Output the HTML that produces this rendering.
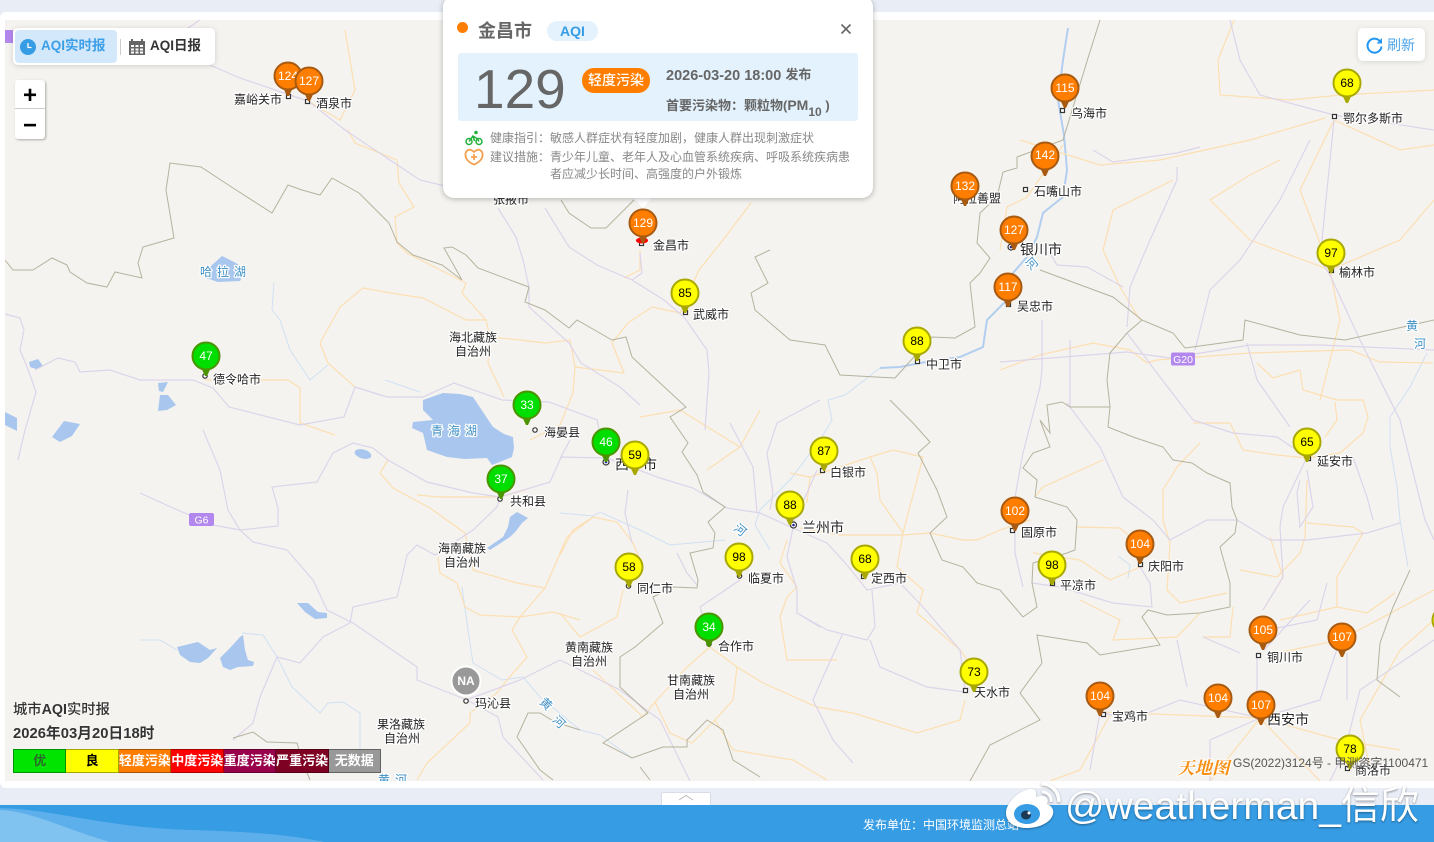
<!DOCTYPE html>
<html lang="zh"><head><meta charset="utf-8"><title>城市AQI实时报</title>
<style>
*{box-sizing:border-box}
html,body{margin:0;padding:0;width:1434px;height:842px;overflow:hidden;background:#e9edf6;font-family:"Liberation Sans","Noto Sans CJK SC",sans-serif}
.a{position:absolute}
#frame{left:0;top:12px;width:1434px;height:776px;background:#fff;border-radius:6px 0 0 6px}
#map{left:0;top:0}
.l text{font-size:12px;fill:#222;stroke:#fff;stroke-width:2.5px;paint-order:stroke;stroke-linejoin:round}
.l text.b{font-size:14px}
.w text{font-size:12px;fill:#3d8fc4;stroke:#fff;stroke-width:2.5px;paint-order:stroke;stroke-linejoin:round}
.m text{font-size:12px;text-anchor:middle;font-family:"Liberation Sans",sans-serif}
.m .o,.m .g,.m .n{fill:#fff}.m .y{fill:#000}
.rd{fill:none;stroke:#dcd4ea;stroke-width:1.2}
.hw{fill:none;stroke:#fcdfb2;stroke-width:1.2}
.bd{fill:none;stroke:#b5b39e;stroke-width:1}
.rv{fill:none;stroke:#cfe0f4;stroke-width:1}
.yr{fill:none;stroke:#b2cef0;stroke-width:2}
#tabs{left:13px;top:28px;width:202px;height:37px;background:#fff;border-radius:5px;box-shadow:0 1px 6px rgba(0,0,0,.15)}
#act{left:2px;top:2px;width:102px;height:33px;background:#d3e8fb;border-radius:4px}
#zoom{left:15px;top:80px;width:30px;height:59px;background:#fff;border-radius:3px;box-shadow:1px 1px 2px rgba(0,0,0,.3);color:#000;text-align:center}
#refresh{left:1358px;top:28px;width:67px;height:33px;background:#fff;border-radius:5px;box-shadow:0 1px 6px rgba(0,0,0,.12)}
#pop{left:443px;top:-4px;width:430px;height:202px;background:#fff;border-radius:11px;box-shadow:0 1px 6px rgba(0,0,0,.28)}
#leg{left:13px;top:749px;width:368px;height:24px;display:flex;font-size:13px;font-weight:bold;line-height:22px;text-align:center;color:#fff}
#leg div{flex:1;border:1px solid rgba(0,0,0,.35);border-left-width:0;white-space:nowrap;overflow:hidden}
#leg div:first-child{border-left-width:1px}
#foot{left:0;top:805px;width:1434px;height:37px;background:#369ce4;overflow:hidden}
</style></head><body>
<div class="a" id="frame"></div>
<svg class="a" id="map" width="1434" height="842" viewBox="0 0 1434 842">
<defs>
<clipPath id="c"><rect x="5" y="20" width="1429" height="761"/></clipPath>
<g id="p"><path d="M-5 11.500H5L1 20H-1Z" fill="currentColor" stroke="none"/><circle r="13.500" stroke-width="2"/></g>
</defs>
<g clip-path="url(#c)">
<rect x="5" y="20" width="1429" height="761" fill="#f5f3ef"/>
<!-- lakes -->
<g fill="#a9c6ee">
<path d="M423 400L443 393 460 394 473 397 483 412 493 427 504 434 513 437 514 448 512 457 492 465 487 458 465 459 447 457 427 450 423 433 412 428 413 422 433 420 423 410Z"/>
<path d="M510 517L517 512 528 518 522 523 516 531 510 537 490 550 487 548 503 537 508 527Z"/>
<path d="M211 266L222 256 236 263 246 270 240 281 218 282 206 278Z"/>
<ellipse cx="363" cy="454" rx="8.500" ry="4.500" transform="rotate(15 363 454)"/>
<path d="M297 603L308 603 318 612 327 613 327 618 315 619 305 612Z"/>
<path d="M177 647L198 642 210 650 217 648 208 658 200 663 190 662 180 655Z"/>
<path d="M240 637L243 635 245 650 248 660 254 662 253 666 238 667 230 670 223 667 220 658 230 648Z"/>
<path d="M29 362L38 359 43 366 36 369 30 367ZM158 383L168 382 163 392 159 391ZM160 395L168 395 176 405 167 410 158 411ZM5 412L17 418 17 431 5 425ZM52 437L64 421 80 424 72 436 60 442Z"/>
</g>
<!-- rivers -->
<path class="yr" d="M1068 28L1063 60 1058 100 1064 135 1067 170 1063 197 1043 213 1037 237 1027 257 1013 273 1007 300 987 320 983 347 960 357 920 363 900 367 880 368"/>
<g class="rv">
<path d="M880 368L845 395 828 400 832 420 820 440 790 480 760 510 755 525 770 550M800 500L780 510"/>
<path d="M1427 353L1410 387 1390 417 1390 447 1397 487 1400 520 1408 567"/>
<path d="M242 633L263 635 277 657 292 687 320 713 328 703 343 702 360 713 360 750"/>
<path d="M462 587L468 630 473 663 502 680 523 677 540 697 580 730 600 735 632 758"/>
<path d="M140 640L160 640 177 650M560 513L593 516 600 512 640 530 670 545 725 540"/>
<path d="M272 310L280 320 290 350 310 380 328 365M274 282L272 310M420 392L385 380"/>
<path d="M1118 556L1130 565 1128 578"/>
</g>
<!-- highways -->
<g class="hw">
<path d="M348 130L355 143 397 160 399 183 414 207 395 217 397 243 407 253 466 283 462 293 486 320 490 337 520 340 545 343 570 340 575 367 573 393 560 425 530 440"/>
<path d="M490 337L488 363 504 397"/>
<path d="M320 343L340 307 363 288 391 293 423 298 466 320 486 320M320 343L328 363 355 387"/>
<path d="M205 380L288 380 300 388 300 423 335 435"/>
<path d="M640 250L640 270 624 278M680 313L652 307 628 323 612 343 624 373 575 367M699 270L723 240 751 203M680 313L699 270"/>
<path d="M388 460L380 473 393 488 430 508 465 533 473 570 517 583 545 588 520 617 512 630 527 657 507 680 497 693 470 713 470 723 427 763 417 780"/>
<path d="M417 495L440 497 500 497 525 490M438 557L440 573 457 583 465 607 480 615 520 617 553 612 580 620M545 588L567 537 580 527 593 517 617 522 633 543 640 560"/>
<path d="M560 555L573 530 593 517M623 590L617 617 580 637 560 613M593 670L643 717 655 702 687 667 710 647 737 667 763 683 817 707 853 713 917 733 960 720 965 700"/>
<path d="M655 702L670 733 692 743 715 720 733 700 737 667M715 720L733 750 793 760 827 780"/>
<path d="M640 417L680 410 740 447 760 410M707 470L740 447M810 477L790 473M807 503L810 477 870 457 893 450 923 457 903 533 880 500 877 473 870 457"/>
<path d="M787 540L780 563 797 587 787 597 780 617 787 660 837 660M800 528L840 535 903 535 930 533 963 540 977 540 1000 530 1030 520"/>
<path d="M903 533L897 567 923 590 917 613 960 650 975 670"/>
<path d="M1000 370L1040 355 1093 343 1130 350 1147 363 1157 360 1250 353 1350 350 1380 362 1433 363"/>
<path d="M1300 370L1303 390 1337 400 1363 400 1368 417 1363 433 1340 453 1307 458M1335 402L1337 420 1325 437M1257 363L1273 378 1300 370"/>
<path d="M1193 423L1230 423 1243 450 1277 455 1307 458M1200 443L1177 467 1163 490 1163 520 1170 543 1167 590 1180 603 1227 593"/>
<path d="M1103 460L1043 487 1035 497M1077 527L1120 528 1140 545M1033 553L1080 560 1110 580 1140 567"/>
<path d="M1240 570L1277 577 1300 553 1305 537 1307 480M1270 537L1283 577 1263 610M1307 523L1353 527 1363 533 1337 577 1337 607 1367 613 1395 593M1280 620L1337 607"/>
<path d="M1203 637L1230 637 1233 607M1080 600L1120 620 1113 640 1177 637 1200 613"/>
<path d="M1000 250L1007 207 1027 197 1063 145M1173 180L1113 210 1103 250 1120 287 1140 320"/>
<path d="M1110 715L1080 770 1050 781M1210 781L1260 718 1320 781M1370 770L1360 720 1400 650 1434 620M1267 655L1340 640 1434 590M1100 712L1180 715 1260 718 1340 740 1400 750"/>
<path d="M1334 120L1400 150 1434 145M1334 120L1300 190 1330 270 1340 320 1320 400M1234 20L1218 60 1220 95 1290 100 1340 95 1434 90M1330 270L1400 240 1434 200M1330 270L1250 240 1210 200 1250 175 1280 160M1020 140L1100 165 1160 160 1250 140 1325 118"/>
<path d="M308 101L340 120 355 90 345 30"/>
</g>
<!-- national roads -->
<g class="rd">
<path d="M5 314L20 318 24 330 20 350 25 362 30 375 36 392 25 430 18 460"/>
<path d="M35 370L58 358 75 362 80 372 110 370 140 380 193 380 213 388 229 407 300 425 344 417 355 387 387 397 423 397 454 383 502 400 549 402 597 420 606 462"/>
<path d="M140 493L173 508 213 525 240 530 278 526 278 508 272 487 317 482 333 453 353 443 373 448 388 460 427 482 473 493 500 497 550 482 562 455 570 440"/>
<path d="M203 430L220 470 228 510 240 530 253 542 287 550 313 580 327 610 353 623 417 667 417 680 467 700 498 717 503 737 543 780"/>
<path d="M350 623L353 607 397 597 403 573 407 555 417 545 435 555 473 530 497 507 500 497M350 623L323 637 300 663 277 657 260 697 253 723 233 740"/>
<path d="M560 457L607 458 660 478 693 488 727 508 760 513 793 528 827 543 847 565 867 590 900 583 923 607 960 650 965 690"/>
<path d="M872 590L875 627 867 640 827 630 797 613M793 528L787 557 797 590 797 613 820 627M843 633L823 677 813 700 833 740 853 763M870 640L880 667 927 687 965 692"/>
<path d="M817 470L807 493 793 523M767 453L777 423 820 400M767 453L773 493 770 510M730 423L753 467 757 513M740 580L700 607 710 640M628 490L625 513 632 543M677 553L687 573 697 585"/>
<path d="M200 20L170 40 210 65 240 78 290 95 308 101 345 130 420 180 490 197M498 208L516 237 523 260 529 287 529 307 569 343 581 363 620 387 640 405"/>
<path d="M545 208L569 247 597 265 632 280 664 300 684 317 707 350 709 373 705 430M640 253L642 273 632 280"/>
<path d="M1127 333L1160 377 1193 420 1233 433 1277 437 1307 457M1247 343L1257 380 1290 427M1307 457L1283 507 1280 527 1283 577 1263 610M1300 480L1297 493 1300 527 1313 507 1307 470"/>
<path d="M1067 403L1100 447 1123 497 1153 520 1170 540 1207 520 1237 520 1270 540 1307 540 1367 533 1400 523"/>
<path d="M1140 567L1150 583 1152 607 1113 603 1060 587 1032 583M1353 457L1367 497 1373 520M1327 583L1317 620 1267 630M1347 653V700M1257 657V697M1203 637L1240 653M1177 640L1187 687"/>
<path d="M1042 320L1042 370 1040 387 1023 453 1015 497 1015 553 1023 587M1070 340V407M1000 362L1127 352 1170 358 1250 345 1320 345 1434 350"/>
<path d="M1093 150L1113 162 1177 153 1200 147M1177 167V180L1150 240 1130 287 1127 327M1050 253L1057 265 1087 267 1123 287"/>
<path d="M1310 140L1280 200 1240 260 1210 290 1195 350M1334 120L1320 260 1330 275 1360 340 1400 420 1425 520 1434 540M1434 130L1334 115 1260 95 1240 60 1230 20"/>
<path d="M1264 650L1310 600M1340 640L1320 700 1260 718 1180 700 1130 720 1100 712 1090 770M1260 718L1210 740 1210 781M1434 640L1360 690 1345 750 1330 781"/>
<path d="M690 781L660 720 620 690 560 660 520 680 466 700"/>
</g>
<!-- province borders -->
<g class="bd">
<path d="M5 260L13 270 33 270 52 258 67 265 70 272 87 283 107 287 115 272 142 278 138 263 143 247 150 245 174 238 166 190 170 163 201 167 233 188 272 213 288 185 302 190 320 195 332 178 359 193 389 223 397 242 413 255 442 265 462 280 444 248 452 247 466 255 478 268 518 283 529 287 525 302 545 310 569 328 577 320 612 340 626 337 632 357 660 383 686 407 670 417 688 443 682 452 697 475 703 492 725 507 708 522 715 533 713 548 690 553 698 580 697 588 673 587 653 597 663 623 635 647 620 657 620 687 648 713 603 743 632 758 663 747 687 747 687 740 707 720 723 730 733 760 760 777"/>
<path d="M561 200L569 213 591 228 606 228 634 200"/>
<path d="M640 767L650 780M770 250L755 257 768 283 751 293 755 310 790 340 825 345 840 375 895 378 932 337 955 338 975 327 970 283 980 273 990 258 977 243 980 213 997 197 1003 172 1017 168 1017 157 1063 140 1088 58 1100 20"/>
<path d="M1040 270L1113 297 1142 320 1173 333 1185 348 1207 345 1243 340 1245 320 1300 335 1345 340 1434 320"/>
<path d="M890 400L913 423 930 442 918 453 937 490 947 517 930 533 942 560 963 567 977 583 1000 590 1023 617 1037 607 1032 583 1033 563 1067 553 1075 550 1077 520 1067 507 1035 497 1037 480 1023 468 1033 453 1050 447 1040 420 1050 433 1047 405 1062 402 1070 407 1110 407 1107 380 1110 353 1127 333 1142 320"/>
<path d="M1110 407L1108 427 1133 437 1163 447 1173 460 1192 463 1207 473 1230 483 1232 507 1237 520 1235 533 1220 547 1230 583 1230 607 1200 613 1167 615 1148 610 1142 617 1160 645 1100 655 1087 643 1037 635 1042 663 1020 693 1040 720 990 745 970 781"/>
<path d="M1410 570L1393 607 1380 643 1377 680 1400 697"/>
<path d="M233 738L253 732 267 742 297 743 303 763 310 780M517 737L528 713 540 713 555 722 580 730M517 737L540 770 553 780"/>
</g>
<!-- badges -->
<rect x="189" y="513" width="25" height="13" rx="2" fill="#b388ee"/><text x="201.500" y="523.500" font-size="10.500" fill="#fff" text-anchor="middle">G6</text>
<rect x="1171" y="352.500" width="24" height="13" rx="2" fill="#b388ee"/><text x="1183" y="363" font-size="10.500" fill="#fff" text-anchor="middle">G20</text>
<rect x="5" y="30" width="8" height="13" fill="#b388ee"/>
<!-- water labels -->
<g class="w">
<text x="200" y="276">哈</text><text x="217" y="276">拉</text><text x="234" y="276">湖</text>
<text x="431" y="435">青</text><text x="448" y="435">海</text><text x="465" y="435">湖</text>
<text x="1026" y="268" transform="rotate(-40 1032 264)">河</text>
<text x="734" y="534" transform="rotate(40 740 530)">河</text>
<text x="540" y="708" transform="rotate(45 546 704)">黄</text><text x="553" y="726" transform="rotate(45 559 722)">河</text>
<text x="1406" y="330">黄</text><text x="1414" y="348">河</text>
<text x="378" y="784">黄</text><text x="395" y="784">河</text>
</g>
<!-- city dots -->
<g fill="#fff" stroke="#333" stroke-width="1.2">
<rect x="286.500" y="94.500" width="4" height="4"/><rect x="305.500" y="99.500" width="4" height="4"/><rect x="639.500" y="241.500" width="4" height="4"/><rect x="683.500" y="310.500" width="4" height="4"/><rect x="1060.500" y="108.500" width="4" height="4"/><rect x="1332.500" y="114.500" width="4" height="4"/><rect x="1023.500" y="187.500" width="4" height="4"/><rect x="1329.500" y="268.500" width="4" height="4"/><rect x="1006.500" y="302.500" width="4" height="4"/><rect x="915.500" y="359.500" width="4" height="4"/><rect x="820.500" y="468.500" width="4" height="4"/><rect x="1010.500" y="528.500" width="4" height="4"/><rect x="1306.500" y="456.500" width="4" height="4"/><rect x="1138.500" y="562.500" width="4" height="4"/><rect x="1050.500" y="581.500" width="4" height="4"/><rect x="861.500" y="574.500" width="4" height="4"/><rect x="1256.500" y="653.500" width="4" height="4"/><rect x="1101.500" y="712.500" width="4" height="4"/><rect x="963.500" y="688.500" width="4" height="4"/><rect x="1345.500" y="766.500" width="4" height="4"/>
<circle cx="205" cy="376" r="2.200"/><circle cx="535" cy="430" r="2.200"/><circle cx="500" cy="499" r="2.200"/><circle cx="466" cy="701" r="2.200"/><circle cx="628.500" cy="586" r="2.200"/><circle cx="739.500" cy="576" r="2.200"/><circle cx="709" cy="644" r="2.200"/>
<circle cx="606" cy="462" r="3"/><circle cx="793.500" cy="525" r="3"/><circle cx="1011" cy="247" r="3"/>
</g>
<g fill="#22229a"><circle cx="606" cy="462" r="1.300"/><circle cx="793.500" cy="525" r="1.300"/><circle cx="1011" cy="247" r="1.300"/></g>
<!-- city labels -->
<g class="l" transform="translate(0 .5)">
<text x="234" y="103">嘉峪关市</text><text x="316" y="107">酒泉市</text><text x="493" y="203">张掖市</text><text x="653" y="249">金昌市</text><text x="693" y="318">武威市</text><text x="1071" y="117">乌海市</text><text x="1343" y="122">鄂尔多斯市</text><text x="1034" y="195">石嘴山市</text><text x="953" y="202">阿拉善盟</text><text class="b" x="1020" y="254">银川市</text><text x="1339" y="276">榆林市</text><text x="1017" y="310">吴忠市</text><text x="926" y="368">中卫市</text><text x="213" y="383">德令哈市</text><text x="449" y="341">海北藏族</text><text x="455" y="355">自治州</text><text x="544" y="436">海晏县</text><text class="b" x="615" y="469">西宁市</text><text x="510" y="505">共和县</text><text x="830" y="476">白银市</text><text class="b" x="802" y="532">兰州市</text><text x="1021" y="536">固原市</text><text x="1317" y="465">延安市</text><text x="1148" y="570">庆阳市</text><text x="1060" y="589">平凉市</text><text x="871" y="582">定西市</text><text x="748" y="582">临夏市</text><text x="637" y="592">同仁市</text><text x="438" y="552">海南藏族</text><text x="444" y="566">自治州</text><text x="565" y="651">黄南藏族</text><text x="571" y="665">自治州</text><text x="667" y="684">甘南藏族</text><text x="673" y="698">自治州</text><text x="718" y="650">合作市</text><text x="475" y="707">玛沁县</text><text x="377" y="728">果洛藏族</text><text x="384" y="742">自治州</text><text x="974" y="696">天水市</text><text x="1267" y="661">铜川市</text><text x="1112" y="720">宝鸡市</text><text class="b" x="1267" y="724">西安市</text><text x="1355" y="774">商洛市</text>
</g>
<ellipse cx="642" cy="240.500" rx="6" ry="3" fill="#f00"/>
<!-- markers -->
<g class="m">
<g fill="#ff7e00" stroke="#a85a10" style="color:#a85a10">
<use href="#p" x="288" y="76"/><use href="#p" x="1065" y="88"/><use href="#p" x="1045" y="156"/><use href="#p" x="965" y="186"/><use href="#p" x="1014" y="230"/><use href="#p" x="1008" y="287"/><use href="#p" x="643" y="223"/><use href="#p" x="1015" y="511"/><use href="#p" x="1140" y="544"/><use href="#p" x="1263" y="630"/><use href="#p" x="1342" y="637"/><use href="#p" x="1100" y="696"/><use href="#p" x="1218" y="698"/><use href="#p" x="1261" y="705"/>
</g>
<g font-weight="normal">
<text class="o" x="288" y="80">124</text><text class="o" x="1065" y="92">115</text><text class="o" x="1045" y="159">142</text><text class="o" x="965" y="190">132</text><text class="o" x="1014" y="234">127</text><text class="o" x="1008" y="291">117</text><text class="o" x="643" y="227">129</text><text class="o" x="1015" y="515">102</text><text class="o" x="1140" y="548">104</text><text class="o" x="1263" y="634">105</text><text class="o" x="1342" y="641">107</text><text class="o" x="1100" y="700">104</text><text class="o" x="1218" y="702">104</text><text class="o" x="1261" y="709">107</text>
</g>
<use href="#p" x="309" y="81" fill="#ff7e00" stroke="#a85a10" style="color:#a85a10"/><text class="o" x="309" y="85">127</text>
<g fill="#00de00" stroke="#4b9400" style="color:#4b9400">
<use href="#p" x="206" y="356"/><use href="#p" x="527" y="405"/><use href="#p" x="606" y="442"/><use href="#p" x="501" y="479"/><use href="#p" x="709" y="627"/>
</g>
<text class="g" x="206" y="360">47</text><text class="g" x="527" y="409">33</text><text class="g" x="606" y="446">46</text><text class="g" x="501" y="483">37</text><text class="g" x="709" y="631">34</text>
<g fill="#ff0" stroke="#a8a800" style="color:#a8a800">
<use href="#p" x="635" y="455"/><use href="#p" x="685" y="293"/><use href="#p" x="824" y="451"/><use href="#p" x="790" y="505"/><use href="#p" x="917" y="341"/><use href="#p" x="629" y="567"/><use href="#p" x="739" y="557"/><use href="#p" x="865" y="559"/><use href="#p" x="974" y="672"/><use href="#p" x="1052" y="565"/><use href="#p" x="1350" y="749"/><use href="#p" x="1307" y="442"/><use href="#p" x="1331" y="253"/><use href="#p" x="1347" y="83"/><use href="#p" x="1446" y="620"/>
</g>
<text class="y" x="635" y="459">59</text><text class="y" x="685" y="297">85</text><text class="y" x="824" y="455">87</text><text class="y" x="790" y="509">88</text><text class="y" x="917" y="345">88</text><text class="y" x="629" y="571">58</text><text class="y" x="739" y="561">98</text><text class="y" x="865" y="563">68</text><text class="y" x="974" y="676">73</text><text class="y" x="1052" y="569">98</text><text class="y" x="1350" y="753">78</text><text class="y" x="1307" y="446">65</text><text class="y" x="1331" y="257">97</text><text class="y" x="1347" y="87">68</text>
<circle cx="466" cy="681" r="14.500" fill="#999" stroke="#fff" stroke-width="2"/><text class="n" x="466" y="685" font-weight="bold">NA</text>
</g>
<!-- copyright -->
<text x="1177" y="774" font-size="17.500" font-weight="bold" font-style="italic" fill="#f78f12" stroke="#fff" stroke-width="2" paint-order="stroke" font-family="'Noto Serif CJK SC',serif">天地图</text>
<text x="1233" y="767" font-size="12" fill="#555">GS(2022)3124号 - 甲测资字1100471</text>
</g>
</svg>

<div class="a" id="tabs">
  <div class="a" id="act"></div>
  <svg class="a" style="left:7px;top:11px" width="16" height="16" viewBox="0 0 16 16"><circle cx="8" cy="8" r="8" fill="#369ce4"/><path d="M8 4V8.500H11.500" fill="none" stroke="#fff" stroke-width="1.300"/></svg>
  <div class="a" style="left:28px;top:9px;font-size:13.500px;font-weight:bold;color:#3c9fe8;white-space:nowrap;line-height:18px">AQI实时报</div>
  <div class="a" style="left:107px;top:11px;width:1px;height:16px;background:#ccc"></div>
  <svg class="a" style="left:116px;top:10px" width="16" height="17" viewBox="0 0 16 17"><path d="M0 3H16V17H0Z" fill="#666"/><path d="M3 1V4M13 1V4" stroke="#666" stroke-width="2"/><path d="M2 7H5V9H2ZM6.500 7H9.500V9H6.500ZM11 7H14V9H11ZM2 10.500H5V12.500H2ZM6.500 10.500H9.500V12.500H6.500ZM11 10.500H14V12.500H11ZM2 13.500H5V15.500H2ZM6.500 13.500H9.500V15.500H6.500ZM11 13.500H14V15.500H11Z" fill="#fff"/></svg>
  <div class="a" style="left:137px;top:9px;font-size:13.500px;font-weight:bold;color:#333;white-space:nowrap;line-height:18px">AQI日报</div>
</div>

<div class="a" id="zoom">
  <div style="height:29px;line-height:31px;font-size:24px;font-weight:bold;border-bottom:1px solid #ccc">+</div>
  <div style="height:30px;line-height:33px;font-size:24px;font-weight:bold">−</div>
</div>

<div class="a" id="refresh">
  <svg class="a" style="left:8px;top:9px" width="17" height="17" viewBox="0 0 17 17"><path d="M14.500 5A7 7 0 1 0 15.500 9.500" fill="none" stroke="#2196f3" stroke-width="2"/><path d="M16 1V6.500H10.500Z" fill="#2196f3"/></svg>
  <div class="a" style="left:29px;top:8px;font-size:14px;line-height:18px;color:#4aa3ea;white-space:nowrap">刷新</div>
</div>

<div class="a" style="left:13px;top:701px;font-size:14.300px;line-height:18px;color:#333;font-weight:500;white-space:nowrap;text-shadow:0 0 2px #fff">城市<b>AQI</b>实时报</div>
<div class="a" style="left:13px;top:725px;font-size:14.800px;line-height:18px;color:#333;font-weight:bold;white-space:nowrap;text-shadow:0 0 2px #fff">2026年03月20日18时</div>
<div class="a" id="leg">
  <div style="background:#00e400;color:#2a6a2a">优</div><div style="background:#ff0;color:#000">良</div><div style="background:#ff7e00">轻度污染</div><div style="background:#f00">中度污染</div><div style="background:#99004c">重度污染</div><div style="background:#7e0023">严重污染</div><div style="background:#999">无数据</div>
</div>

<svg class="a" style="left:633px;top:197px" width="20" height="12" viewBox="0 0 20 12"><path d="M0 0H20L10 11Z" fill="#fff"/></svg>
<div class="a" id="pop">
  <div class="a" style="left:14px;top:26px;width:11px;height:11px;border-radius:50%;background:#ff7e00"></div>
  <div class="a" style="left:35px;top:23px;font-size:18px;line-height:24px;font-weight:bold;color:#666;white-space:nowrap">金昌市</div>
  <div class="a" style="left:104px;top:25px;width:51px;height:20px;border-radius:10px;background:#e3f2fd;color:#369ce4;font-size:14px;line-height:20px;font-weight:bold;text-align:center">AQI</div>
  <svg class="a" style="left:397px;top:27px" width="12" height="12" viewBox="0 0 12 12"><path d="M1.500 1.500L10.500 10.500M10.500 1.500L1.500 10.500" stroke="#666" stroke-width="1.600"/></svg>
  <div class="a" style="left:15px;top:57px;width:400px;height:68px;border-radius:3px;background:#e3f2fd"></div>
  <div class="a" style="left:31px;top:61px;font-size:55px;line-height:64px;color:#666;font-family:'Liberation Sans',sans-serif">129</div>
  <div class="a" style="left:139px;top:72px;width:68px;height:25px;border-radius:12px;background:#ff7e00;color:#fff;font-size:14px;line-height:25px;font-weight:500;text-align:center;white-space:nowrap">轻度污染</div>
  <div class="a" style="left:223px;top:71px;font-size:14.500px;line-height:18px;font-weight:bold;color:#666;white-space:nowrap">2026-03-20 18:00 <span style="font-size:13px;position:relative;top:-1px">发布</span></div>
  <div class="a" style="left:223px;top:100px;font-size:13px;line-height:18px;font-weight:bold;color:#666;white-space:nowrap">首要污染物：颗粒物(<span style="font-size:14px">PM</span><sub style="font-size:12px;line-height:0;position:relative;top:2px;vertical-align:sub">10</sub>&nbsp;)</div>
  <svg class="a" style="left:22px;top:134px" width="18" height="16" viewBox="0 0 18 16"><g fill="none" stroke="#22b03a" stroke-width="1.500"><circle cx="4" cy="11.500" r="3"/><circle cx="14" cy="11.500" r="3"/><path d="M4 11.500L8 6 12 8.500 14 11.500M8 6L9.500 11"/></g><circle cx="11" cy="2.500" r="1.800" fill="#22b03a"/></svg>
  <svg class="a" style="left:21px;top:152px" width="20" height="18" viewBox="0 0 20 18"><path d="M10 16.500C4 14 1 10 1.500 5.500 2 2.500 5 1 7 2 8.500 2.800 9.500 3.500 10 4 10.500 3.500 11.500 2.800 13 2 15 1 18 2.500 18.500 5.500 19 10 16 14 10 16.500Z" fill="none" stroke="#f4a050" stroke-width="1.800"/><path d="M10 6V12M7 9H13" stroke="#f4a050" stroke-width="1.800"/></svg>
  <div class="a" style="left:47px;top:133px;font-size:12px;line-height:18px;color:#888;white-space:nowrap">健康指引：敏感人群症状有轻度加剧，健康人群出现刺激症状</div>
  <div class="a" style="left:47px;top:152px;font-size:12px;line-height:18px;color:#888;white-space:nowrap">建议措施：青少年儿童、老年人及心血管系统疾病、呼吸系统疾病患</div>
  <div class="a" style="left:107px;top:169px;font-size:12px;line-height:18px;color:#888;white-space:nowrap">者应减少长时间、高强度的户外锻炼</div>
</div>

<div class="a" style="left:661px;top:792px;width:50px;height:13px;background:#fff;border:1px solid #d8dde6;border-bottom:0;border-radius:2px 2px 0 0"></div>
<svg class="a" style="left:678px;top:794px" width="16" height="8" viewBox="0 0 16 8"><path d="M1 6L8 1.500 15 6" fill="none" stroke="#bbb" stroke-width="1"/></svg>

<div class="a" id="foot">
  <svg class="a" style="left:0;top:0" width="520" height="37" viewBox="0 0 520 37"><path d="M0 3C60 5 100 22 190 25C260 27 290 30 325 37H0Z" fill="#5cafea"/><path d="M0 5C30 6 60 22 110 37H0Z" fill="#80c2f0"/></svg>
  <div class="a" style="left:863px;top:11px;font-size:12px;line-height:18px;color:#fff;white-space:nowrap">发布单位：中国环境监测总站</div>
</div>

<!-- watermark -->
<svg class="a" style="left:1003px;top:780px" width="60" height="52" viewBox="0 0 60 52">
<g style="filter:drop-shadow(0 1px 1px rgba(0,0,0,.35))"><path d="M3 33C3 23 15 11 27 9C33 8 34 13 33 17C40 14 47 17 44 24C49 26 51 30 50 34C48 43 35 48 24 48C13 48 3 43 3 33Z" fill="#fff"/>
<path d="M38 4C47 3 56 11 56 22" fill="none" stroke="#fff" stroke-width="3.500"/><path d="M39 12C44 12 49 16 48 22" fill="none" stroke="#fff" stroke-width="3"/></g>
<ellipse cx="24" cy="34" rx="13" ry="10" fill="#369ce4"/><ellipse cx="23" cy="35" rx="5" ry="4.500" fill="#1d3a55"/><circle cx="26" cy="33" r="1.500" fill="#fff"/>
</svg>
<div class="a" style="left:1065px;top:783px;font-size:39px;line-height:48px;color:#fff;white-space:nowrap;text-shadow:0 1px 2px rgba(0,0,0,.4);font-family:'Liberation Sans','Noto Sans CJK SC',sans-serif">@weatherman_信欣</div>
</body></html>
